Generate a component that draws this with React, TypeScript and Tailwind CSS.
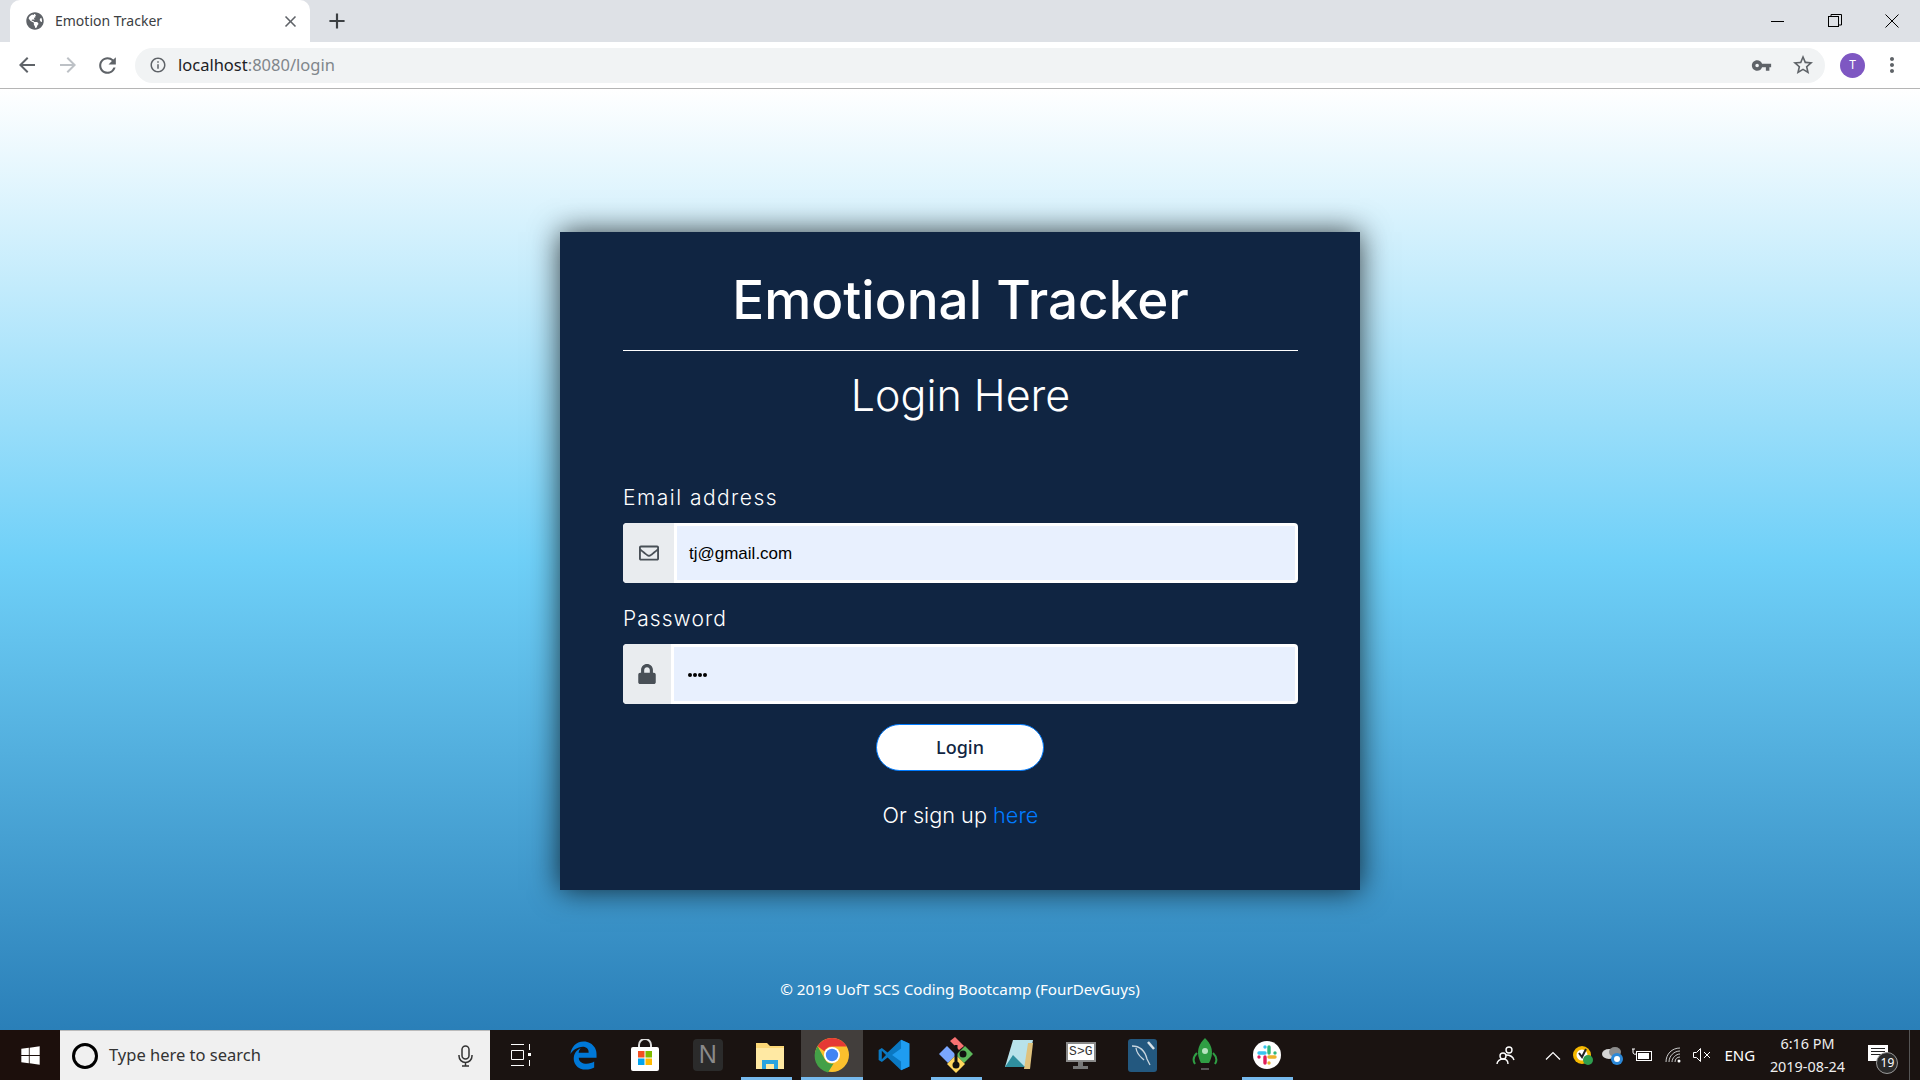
import { FaGlobeAmericas, FaLock, FaRegEnvelope, FaWindows, FaEdgeLegacy } from "react-icons/fa";
import {
  MdAdd,
  MdArrowBack,
  MdArrowForward,
  MdClose,
  MdInfoOutline,
  MdMoreVert,
  MdRefresh,
  MdStarBorder,
  MdVpnKey,
} from "react-icons/md";

const Chrome = () => (
  <div className="flex flex-col h-[89px] border-b border-[#b5b5b5] font-['Noto_Sans',sans-serif]">
    <div className="flex h-[42px] bg-[#dee1e6] items-end pl-[10px]">
      <div className="flex items-center w-[300px] h-[42px] bg-white rounded-t-[10px] pl-[16px] pr-[10px]">
        <FaGlobeAmericas className="text-[#5f6368] text-[18px]" />
        <span className="ml-[11px] mb-[2px] text-[14px] text-[#3c4043] flex-1">Emotion Tracker</span>
        <MdClose className="text-[#5f6368] text-[19px]" />
      </div>
      <div className="flex items-center h-[42px] ml-[14px]">
        <MdAdd className="text-[#3c4043] text-[26px]" />
      </div>
      <div className="ml-auto flex h-[42px]">
        <div className="w-[57px] flex items-center justify-center">
          <div className="w-[13px] h-px bg-black" />
        </div>
        <div className="w-[57px] flex items-center justify-center">
          <svg width="14" height="14" viewBox="0 0 14 14" fill="none" stroke="#000">
            <rect x="0.5" y="2.5" width="10" height="10" />
            <path d="M3 2.5V.5h10.5v10.5h-3" />
          </svg>
        </div>
        <div className="w-[57px] flex items-center justify-center">
          <svg width="14" height="14" viewBox="0 0 14 14" fill="none" stroke="#000">
            <path d="M.5.5l13 13M13.5.5l-13 13" />
          </svg>
        </div>
      </div>
    </div>
    <div className="flex items-center h-[46px] bg-white pl-[15px] pr-[11px]">
      <MdArrowBack className="text-[#5f6368] text-[24px]" />
      <MdArrowForward className="text-[#bdc1c6] text-[24px] ml-[17px]" />
      <MdRefresh className="text-[#5f6368] text-[25px] ml-[15px]" />
      <div className="flex items-center w-[1690px] h-[35px] ml-[15px] rounded-full bg-[#f1f3f4] pl-[14px] pr-[10px]">
        <MdInfoOutline className="text-[#5f6368] text-[18px]" />
        <span className="ml-[11px] text-[16.5px] text-[#202124]">
          localhost<span className="text-[#80868b]">:8080/login</span>
        </span>
        <MdVpnKey className="ml-auto text-[#5f6368] text-[21px]" />
        <MdStarBorder className="ml-[19px] text-[#5f6368] text-[24px]" />
      </div>
      <div className="flex items-center justify-center w-[25px] h-[25px] ml-[15px] rounded-full bg-[#7e57c2] text-white text-[12px]">
        T
      </div>
      <MdMoreVert className="ml-[15px] text-[#5f6368] text-[24px]" />
    </div>
  </div>
);

const LoginCard = () => (
  <div className="flex flex-col w-[800px] h-[658px] mt-[143px] pl-[63px] pr-[62px] pt-[30px] bg-[#102542] text-white shadow-[0_0_28px_rgba(0,0,0,0.75)] font-['Inter',sans-serif]">
    <h1 className="text-center text-[53px] leading-[76px] font-medium">Emotional Tracker</h1>
    <hr className="mt-[12px] border-white" />
    <h2 className="mt-[19px] text-center text-[43px] leading-[50px] font-light">Login Here</h2>
    <label className="mt-[66px] text-[21px] leading-[24px] font-light tracking-[0.07em]">Email address</label>
    <div className="flex h-[60px] mt-[13px] rounded-[4px] overflow-hidden bg-white">
      <div className="flex items-center justify-center w-[51px] bg-[#e9ecef]">
        <FaRegEnvelope className="text-[#495057] text-[20px]" />
      </div>
      <div className="flex items-center flex-1 m-[3px] pl-[12px] pt-[2px] bg-[#e8f0fe] text-black text-[17px] font-['Liberation_Sans',sans-serif]">
        tj@gmail.com
      </div>
    </div>
    <label className="mt-[24px] text-[21px] leading-[24px] font-light tracking-[0.05em]">Password</label>
    <div className="flex h-[60px] mt-[13px] rounded-[4px] overflow-hidden bg-white">
      <div className="flex items-center justify-center w-[48px] bg-[#e9ecef]">
        <FaLock className="text-[#495057] text-[20px]" />
      </div>
      <div className="flex items-center flex-1 m-[3px] pl-[14px] pt-[1px] gap-[1px] bg-[#e8f0fe]">
        <span className="w-[4px] h-[4px] rounded-full bg-black" />
        <span className="w-[4px] h-[4px] rounded-full bg-black" />
        <span className="w-[4px] h-[4px] rounded-full bg-black" />
        <span className="w-[4px] h-[4px] rounded-full bg-black" />
      </div>
    </div>
    <button className="self-center w-[168px] h-[47px] mt-[20px] mr-[1px] rounded-full bg-white border border-[#007bff] text-[#102542] text-[18px] font-['Noto_Sans',sans-serif] font-medium">
      Login
    </button>
    <p className="mt-[29px] text-center text-[21.7px] leading-[30px] font-light">
      Or sign up <a className="text-[#007bff]">here</a>
    </p>
  </div>
);

const ChromeLogo = () => (
  <svg width="36" height="36" viewBox="0 0 36 36">
    <circle cx="18" cy="18" r="17" fill="#fbc02d" />
    <path d="M18 1a17 17 0 0 1 14.7 8.5H18a8.500 8.500 0 0 0-7.600 4.700L3.600 9.300A17 17 0 0 1 18 1z" fill="#e53935" />
    <path d="M3.600 9.300l7 12.500a8.500 8.500 0 0 0 9 4.700L14 35.500A17 17 0 0 1 3.600 9.300z" fill="#43a047" />
    <circle cx="18" cy="18" r="8" fill="#fff" />
    <circle cx="18" cy="18" r="6.200" fill="#4285f4" />
  </svg>
);

const SourceTree = () => (
  <svg width="34" height="36" viewBox="0 0 34 36">
    <path d="M17 18L8 9 0 17l9 9z" fill="#7aa7ff" />
    <path d="M17 18l9-9 8 8-9 9z" fill="#5cb85c" />
    <path d="M17 36l-9-9 9-9 9 9z" fill="#ffd75e" />
    <path d="M11 4l5-4 9 9-5 4z" fill="#f87272" />
    <path d="M17 8v20" stroke="#111" strokeWidth="3" />
    <circle cx="24" cy="17" r="3.500" fill="#111" />
    <circle cx="17" cy="28" r="3.500" fill="#111" />
  </svg>
);

const Slack = () => (
  <div className="flex items-center justify-center w-[28px] h-[28px] rounded-full bg-white">
    <svg width="20" height="20" viewBox="0 0 20 20" fill="none" strokeWidth="3.400" strokeLinecap="round">
      <path d="M8 2v0M2 8h6" stroke="#36c5f0" />
      <path d="M18 8v0M12 2v6" stroke="#2eb67d" />
      <path d="M12 18v0M18 12h-6" stroke="#ecb22e" />
      <path d="M2 12v0M8 18v-6" stroke="#e01e5a" />
    </svg>
  </div>
);

const taskIcons = [
  {
    key: "taskview",
    node: (
      <svg width="21" height="22" viewBox="0 0 21 22" fill="none" stroke="#fff">
        <path d="M0 .5h13M0 21.500h13M.5 6.500h12v9H.5zM18.500 0v6M18.500 16v6" />
        <rect x="17" y="9" width="3" height="3" fill="#fff" stroke="none" />
      </svg>
    ),
  },
  { key: "edge", node: <FaEdgeLegacy className="text-[#0078d7] text-[29px]" /> },
  {
    key: "store",
    node: (
      <svg width="30" height="32" viewBox="0 0 30 32">
        <path d="M9 8V6a6 6 0 0 1 12 0v2" fill="none" stroke="#ddd" strokeWidth="2" />
        <rect x="1" y="8" width="28" height="24" rx="2" fill="#fff" />
        <rect x="8" y="12" width="6.500" height="6.500" fill="#f25022" />
        <rect x="15.500" y="12" width="6.500" height="6.500" fill="#7fba00" />
        <rect x="8" y="19.500" width="6.500" height="6.500" fill="#00a4ef" />
        <rect x="15.500" y="19.500" width="6.500" height="6.500" fill="#ffb900" />
      </svg>
    ),
  },
  {
    key: "notion",
    node: (
      <div className="flex items-center justify-center w-[30px] h-[32px] rounded-[4px] bg-[#2b2b2b] text-[#8a8a8a] text-[25px] font-['Liberation_Sans',sans-serif]">
        N
      </div>
    ),
  },
  {
    key: "explorer",
    line: "w-[51px] ml-[-6px]",
    node: (
      <svg width="30" height="28" viewBox="0 0 30 28">
        <path d="M1 2h11l3 3h14v23H1z" fill="#fcd877" />
        <rect x="1" y="7" width="28" height="21" fill="#ffe9a3" />
        <path d="M7 28v-9h16v9h-4v-5h-8v5z" fill="#29a3e0" />
      </svg>
    ),
  },
  { key: "chrome", active: true, line: "w-full", node: <ChromeLogo /> },
  {
    key: "vscode",
    node: (
      <svg width="32" height="34" viewBox="0 0 100 100">
        <path d="M72 2l26 12v72L72 98 30 58 12 72 2 66V34l10-6 18 14z" fill="#0a78c2" />
        <path d="M72 2l26 12v72L72 98V70L44 50l28-20z" fill="#1f9cf0" />
        <path d="M12 37v26l13-13z" fill="#1b1411" />
      </svg>
    ),
  },
  { key: "sourcetree", line: "w-[51px]", node: <SourceTree /> },
  {
    key: "notepad",
    node: (
      <svg width="28" height="30" viewBox="0 0 28 30">
        <path d="M8 0h20l-5 27H0z" fill="#b8e2ea" />
        <path d="M23 3h5l-3 26h-6z" fill="#dfc27d" />
        <path d="M0 27l8-12 12 12z" fill="#2f8f9f" />
      </svg>
    ),
  },
  {
    key: "sg",
    node: (
      <div className="flex flex-col items-center">
        <div className="flex items-center justify-center w-[30px] h-[20px] bg-white border-2 border-[#8a8a8a] text-[#333] text-[13px] leading-none font-['Liberation_Mono',monospace]">
          S&gt;G
        </div>
        <div className="w-[5px] h-[4px] bg-[#777]" />
        <div className="w-[15px] h-[3px] bg-[#777]" />
      </div>
    ),
  },
  {
    key: "mysql",
    node: (
      <svg width="29" height="33" viewBox="0 0 29 33">
        <rect width="29" height="33" rx="3" fill="#23587f" />
        <path d="M4 7c8 0 13 5 15 13l3 6M8 9c1 7 5 9 8 12" fill="none" stroke="#c9d6df" strokeWidth="1.300" />
        <path d="M20 3l6 7" stroke="#d8e2e8" strokeWidth="2.500" />
      </svg>
    ),
  },
  {
    key: "robo",
    node: (
      <svg width="26" height="34" viewBox="0 0 26 34">
        <path d="M13 0c6 6 7 11 7 15s-2 8-3 10H9c-1-2-3-6-3-10s1-9 7-15z" fill="#2f9e44" />
        <circle cx="13" cy="13" r="3" fill="#b7e4c0" />
        <path d="M5 15c-4 4-4 8-2 11M21 15c4 4 4 8 2 11" fill="none" stroke="#2f9e44" strokeWidth="2" />
        <path d="M9 31h8" stroke="#555" strokeWidth="2" />
      </svg>
    ),
  },
  { key: "slack", line: "w-[51px]", node: <Slack /> },
];

const Tray = () => (
  <div className="flex items-center ml-[193px] h-full text-white">
    <svg className="w-[30px]" width="22" height="20" viewBox="0 0 30 20" fill="none" stroke="#fff" strokeWidth="1.400">
      <circle cx="12" cy="11" r="3" />
      <circle cx="18" cy="5" r="3" />
      <path d="M6 19c0-3 3-5 6-5s5 2 5 5M15 10c4 0 7 2 8 5" />
    </svg>
    <svg className="ml-[24px]" width="16" height="9" viewBox="0 0 16 9" fill="none" stroke="#fff" strokeWidth="1.200">
      <path d="M1 8.500l7-7 7 7" />
    </svg>
    <svg className="ml-[11px]" width="22" height="22" viewBox="0 0 22 22">
      <circle cx="10" cy="11" r="9" fill="#f5b800" />
      <circle cx="10" cy="11" r="5.500" fill="#fff" />
      <path d="M7 9l3 4 4-8" fill="none" stroke="#222" strokeWidth="2" />
      <circle cx="16" cy="16" r="5" fill="#2e9e4f" />
    </svg>
    <svg className="ml-[8px]" width="22" height="20" viewBox="0 0 22 20">
      <ellipse cx="7" cy="9" rx="7" ry="5" fill="#d5d5d5" />
      <ellipse cx="13" cy="7" rx="6" ry="5" fill="#8c8c8c" />
      <circle cx="15" cy="14" r="6" fill="#2b88d8" />
      <circle cx="15" cy="14" r="3" fill="#fff" />
    </svg>
    <svg className="ml-[8px]" width="20" height="14" viewBox="0 0 20 14" fill="none" stroke="#fff">
      <rect x="4.500" y="3.500" width="15" height="9" />
      <rect x="6" y="5" width="11" height="6" fill="#fff" stroke="none" />
      <path d="M1 1v3a2 2 0 0 0 3 2M0 1h3" />
    </svg>
    <svg className="ml-[13px]" width="16" height="16" viewBox="0 0 16 16" fill="none" stroke="#ccc">
      <path d="M1 15C1 7 7 1 15 1M4 15c0-6 5-11 11-11M7 15c0-4 4-8 8-8M10 15c0-3 2-5 5-5" />
      <circle cx="14" cy="14" r="1.500" fill="#fff" stroke="none" />
    </svg>
    <svg className="ml-[12px]" width="19" height="14" viewBox="0 0 19 14" fill="none" stroke="#fff">
      <path d="M.5 4.500h3l4-4v13l-4-4h-3zM11 4l6 6M17 4l-6 6" />
    </svg>
    <span className="ml-[12px] w-[34px] text-[15px] text-white">ENG</span>
    <div className="flex flex-col items-center w-[80px] ml-[9px] text-[14.4px] leading-[23px] text-[#eeeeee]">
      <span>6:16 PM</span>
      <span>2019-08-24</span>
    </div>
    <div className="relative ml-[21px] w-[20px] h-[16px] mt-[-4px] bg-white">
      <div className="mx-[3px] mt-[3px] h-px bg-[#222]" />
      <div className="mx-[3px] mt-[2px] h-px bg-[#222]" />
      <div className="mx-[3px] mt-[2px] h-px bg-[#222]" />
      <span className="absolute left-[8px] top-[7px] flex items-center justify-center w-[22px] h-[22px] rounded-full border border-[#999] bg-[#2a2a2a] text-[12px] text-white">
        19
      </span>
    </div>
    <div className="ml-[21px] w-px h-full bg-[#555]" />
  </div>
);

const Taskbar = () => (
  <div className="flex items-stretch h-[50px] bg-[#1a1311] font-['Noto_Sans',sans-serif]">
    <div className="flex items-center justify-center w-[60px] bg-[#1c0f0c]">
      <FaWindows className="text-white text-[21px]" />
    </div>
    <div className="flex items-center w-[430px] pl-[12px] pr-[17px] bg-[#f0f0f0] border-t border-[#bbb]">
      <div className="w-[26px] h-[26px] rounded-full border-[3px] border-black" />
      <span className="ml-[11px] text-[16.5px] text-[#333]">Type here to search</span>
      <svg className="ml-auto" width="15" height="22" viewBox="0 0 15 22" fill="none" stroke="#333" strokeWidth="1.500">
        <rect x="4" y="1" width="7" height="13" rx="3.500" />
        <path d="M1 10v1a6.500 6.500 0 0 0 13 0v-1M7.500 18v3M4 21h7" />
      </svg>
    </div>
    <div className="flex">
      {taskIcons.map((item) => (
        <div
          key={item.key}
          className={`relative flex items-center justify-center w-[62.2px] ${item.active ? "bg-[#423e3c]" : ""}`}
        >
          {item.node}
          {item.line && (
            <div className={`absolute bottom-0 h-[3px] bg-[#76b9ed] ${item.line}`} />
          )}
        </div>
      ))}
    </div>
    <Tray />
  </div>
);

export default function App() {
  return (
    <div className="flex flex-col h-screen overflow-hidden">
      <Chrome />
      <main className="flex flex-col flex-1 items-center bg-[linear-gradient(180deg,#ffffff_0%,#6fd0f8_50%,#2a7fb8_100%)]">
        <LoginCard />
        <p className="mt-auto pb-[29px] text-[15.2px] leading-[24px] text-white font-['Noto_Sans',sans-serif]">
          © 2019 UofT SCS Coding Bootcamp (FourDevGuys)
        </p>
      </main>
      <Taskbar />
    </div>
  );
}
